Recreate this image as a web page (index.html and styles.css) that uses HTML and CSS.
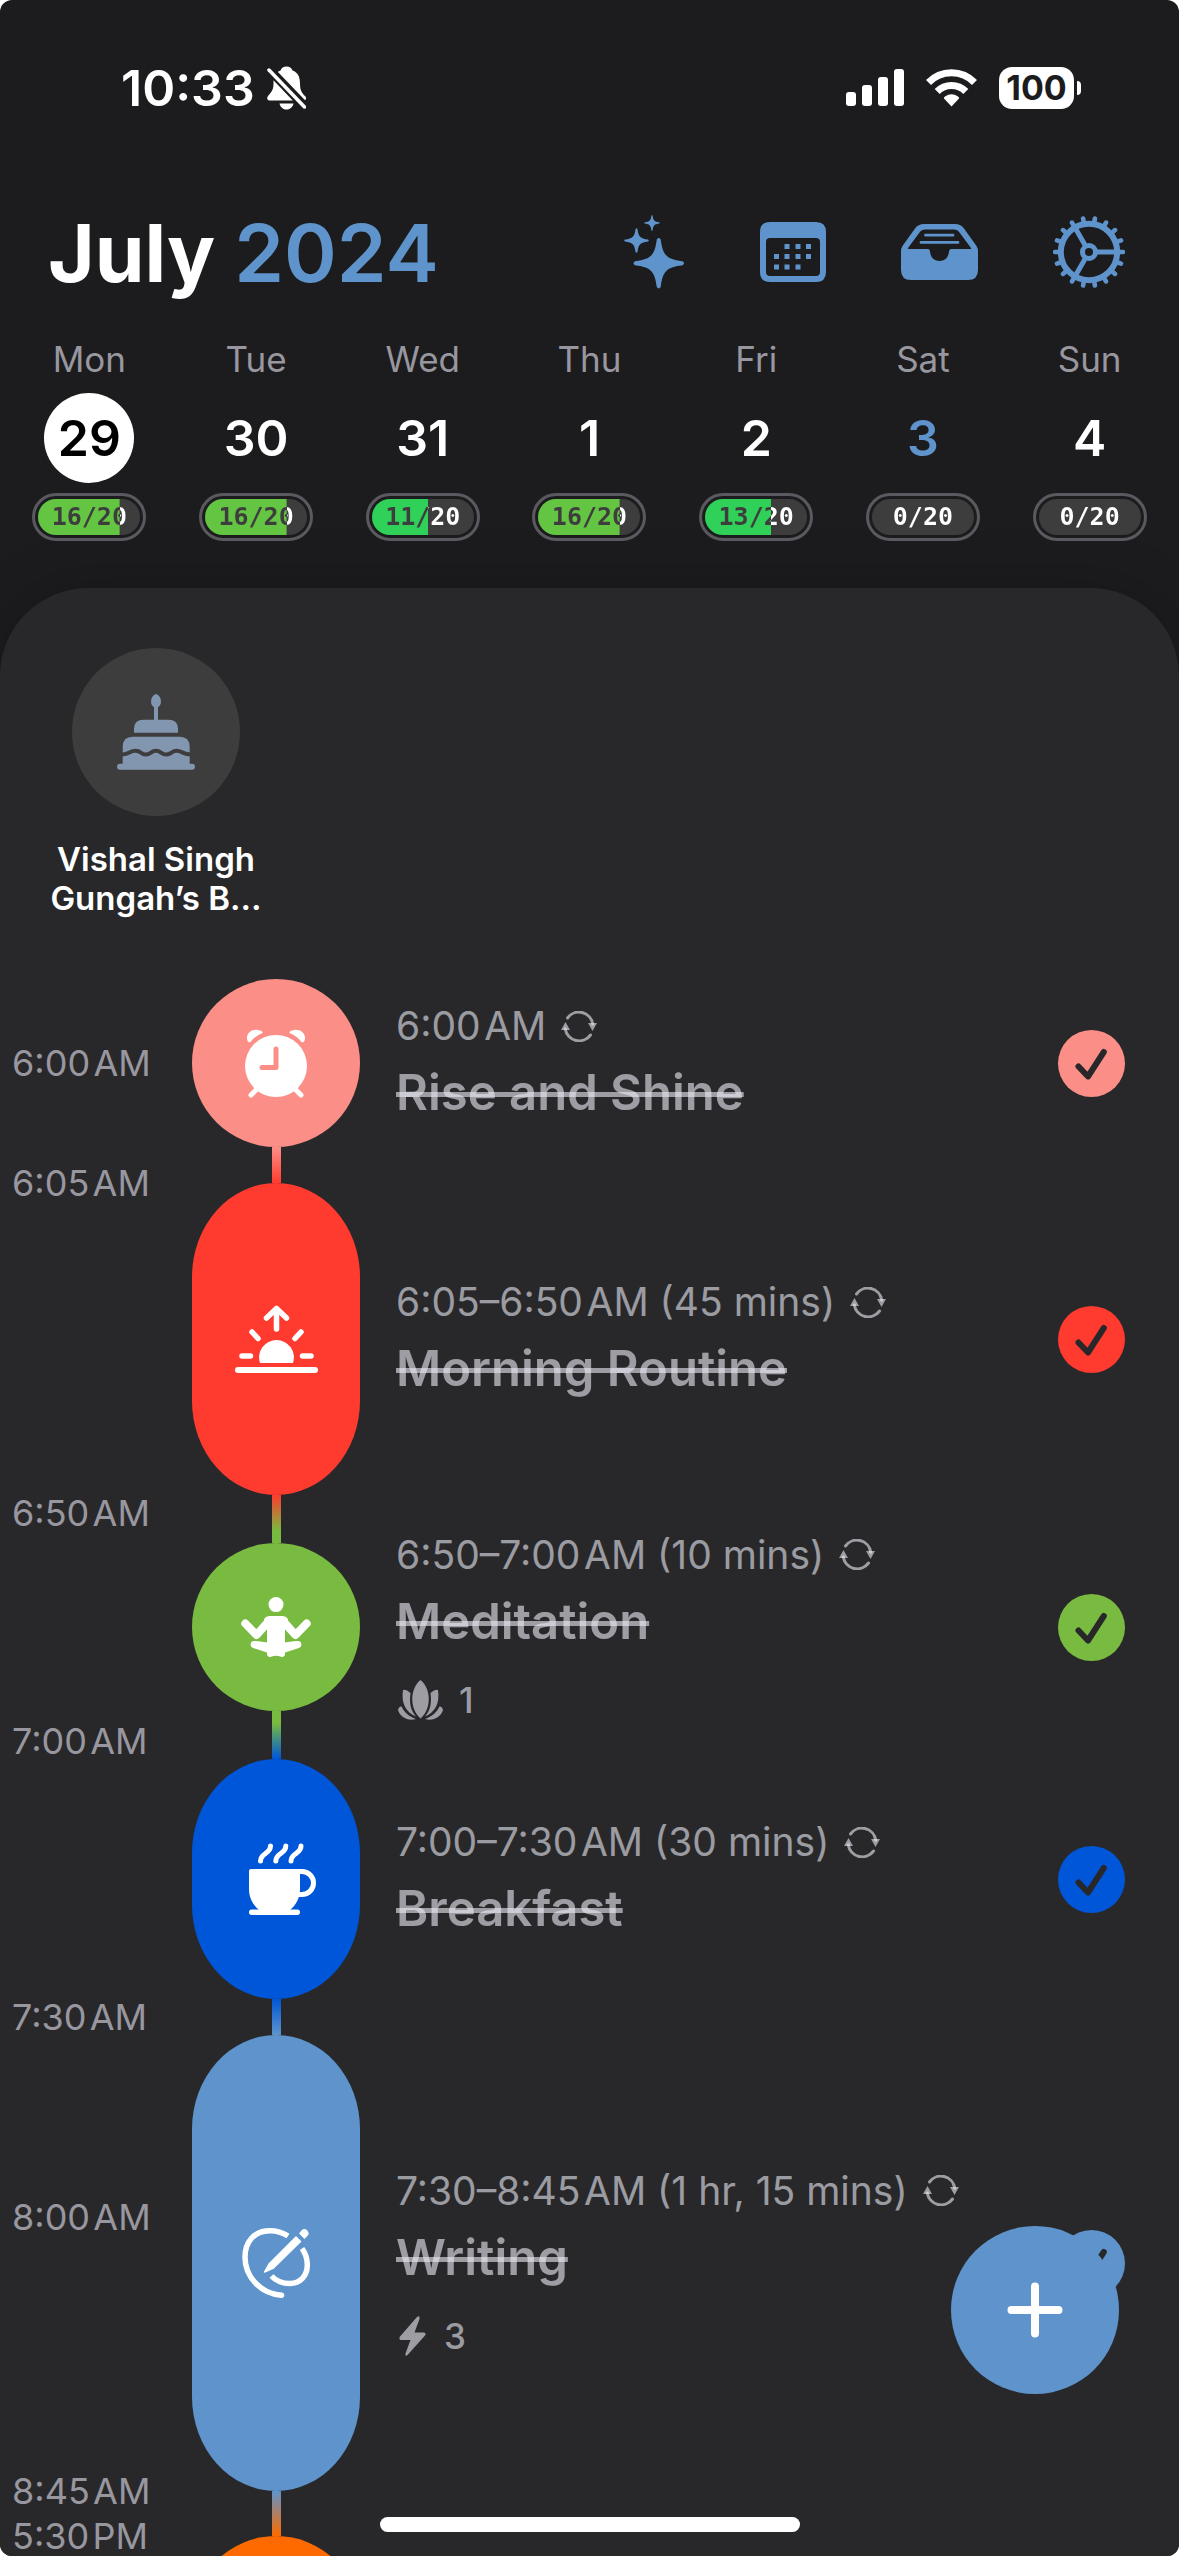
FILE: index.html
```html
<!DOCTYPE html>
<html lang="en">
<head>
    <meta charset="utf-8">
    <meta name="viewport" content="width=device-width, initial-scale=1">
    <title>Day Planner</title>
    <link rel="stylesheet" href="styles.css">
</head>
<body>
    <!-- shared shapes -->
    <svg class="defs" aria-hidden="true">
        <symbol id="repeat" viewBox="0 0 36 31">
            <path d="M6.5 7A14 14 0 0 1 31.7 13M29.5 24A14 14 0 0 1 4.3 18" fill="none" stroke="currentColor" stroke-width="3" stroke-linecap="round"/>
            <path d="M27 12h9l-4.500 8zM0 19h9l-4.500-8z" fill="currentColor"/>
        </symbol>
        <symbol id="tick" viewBox="0 0 67 67">
            <path d="M20.5 36.5L30 46.5L45.8 22" fill="none" stroke="#28282a" stroke-width="6" stroke-linecap="round" stroke-linejoin="round"/>
        </symbol>
        <symbol id="star" viewBox="-26 -26 52 52">
            <path d="M-2-24Q0-27 2-24C4-8 8-4 24-2Q27 0 24 2C8 4 4 8 2 24Q0 27-2 24C-4 8-8 4-24 2Q-27 0-24-2C-8-4-4-8-2-24z" fill="currentColor"/>
        </symbol>
        <symbol id="teeth" viewBox="0 0 36 36">
            <path d="M28.2 10.3L32 11.6M23 19.3L26 21.9M15 26L17 29.4M5.2 29.5L5.9 33.5" stroke="currentColor" stroke-width="4.6" stroke-linecap="round"/>
        </symbol>
    </svg>

    <div class="app">
        <div class="status-bar">
            <div class="status-left">
                <span class="clock">10:33</span>
                <svg width="39" height="44" viewBox="0 0 39 44">
                    <mask id="slash">
                        <rect width="39" height="44" fill="#fff"/>
                        <path d="M-2-1L42 45" stroke="#000" stroke-width="9"/>
                    </mask>
                    <path mask="url(#slash)" fill="#fff" d="M19.5.5c3 0 5 1.6 6 4 5.5 2 7.5 6.500 7.500 13 0 7 2 9.500 5 12.500 2 2 1 4.500-1.500 4.500H2.500c-2.500 0-3-2.500-1.500-4.500 3-3.500 5.500-5.500 5.500-12.500 0-6.500 2-11 7-13 1-2.400 3-4 6-4zM12.500 37.500h14c-1 4-4 6-7 6s-6-2-7-6z"/>
                    <path d="M2 4L37.500 41" stroke="#fff" stroke-width="3.500" stroke-linecap="round"/>
                </svg>
            </div>
            <div class="status-right">
                <svg width="58" height="38" viewBox="0 0 58 38" fill="#fff">
                    <rect x="0" y="23" width="10" height="14" rx="3"/>
                    <rect x="16" y="16" width="10" height="21" rx="3"/>
                    <rect x="32" y="8" width="10" height="29" rx="3"/>
                    <rect x="48" y="0" width="10" height="37" rx="3"/>
                </svg>
                <svg width="51" height="38" viewBox="0 0 51 38">
                    <path d="M2.500 13.500A32 32 0 0 1 48.500 13.500M11.200 22.500A20 20 0 0 1 39.800 22.500" fill="none" stroke="#fff" stroke-width="7"/>
                    <path d="M25.500 37.500L18 29.500Q17.500 28.500 19 27.500Q25.500 23 32 27.500Q33.500 28.500 33 29.500z" fill="#fff"/>
                </svg>
                <div class="battery"><span class="battery-level">100</span><span class="battery-tip"></span></div>
            </div>
        </div>

        <header class="header">
            <h1>July <span class="year">2024</span></h1>
            <div class="actions">
                <button class="icon-button" aria-label="Suggestions">
                    <svg width="61" height="74" viewBox="0 0 61 74">
                        <use href="#star" x="9" y="22.500" width="51.500" height="51.500"/>
                        <use href="#star" x="0" y="13" width="25" height="25"/>
                        <use href="#star" x="20" y="0" width="16" height="16"/>
                    </svg>
                </button>
                <button class="icon-button" aria-label="Calendar">
                    <svg width="66" height="60" viewBox="0 0 66 60" fill="currentColor">
                        <path fill-rule="evenodd" d="M10 0h46q10 0 10 10v40q0 10-10 10H10Q0 60 0 50V10Q0 0 10 0zM10 16q-4 0-4 4v30q0 4 4 4h46q4 0 4-4V20q0-4-4-4z"/>
                        <path d="M24.500 22h5v5h-5zM35.500 22h5v5h-5zM46 22h5v5h-5zM14 32h5v5h-5zM24.500 32h5v5h-5zM35.500 32h5v5h-5zM46 32h5v5h-5zM14 42.500h5v5h-5zM24.500 42.500h5v5h-5zM35.500 42.500h5v5h-5z"/>
                    </svg>
                </button>
                <button class="icon-button" aria-label="Inbox">
                    <svg width="77" height="56" viewBox="0 0 77 56" fill="currentColor">
                        <path fill-rule="evenodd" d="M23 0h31q6 0 9 4.500L75.500 22q1.500 2.500 1.500 5v19q0 10-10 10H10Q0 56 0 46V27q0-2.500 1.500-5L14 4.500Q17 0 23 0zM24 5.500q-3.500 0-5.500 3L7 24q-.5 1 .5 1H27q2 0 2 2.500Q30 37 38.500 37T48 27.500Q48 25 50 25h19.500q1 0 .5-1L58.500 8.500q-2-3-5.500-3z"/>
                        <path d="M24.500 11.200h27.500M20 18.400h37" stroke="currentColor" stroke-width="2.800" stroke-linecap="round"/>
                    </svg>
                </button>
                <button class="icon-button" aria-label="Settings">
                    <svg width="72" height="72" viewBox="-36 -36 72 72" fill="none" stroke="currentColor">
                        <circle r="28.200" stroke-width="6"/>
                        <circle r="6.500" stroke-width="5"/>
                        <path d="M8 0H27M-4-7L-13.500-23.400M-4 7L-13.500 23.400" stroke-width="5"/>
                        <path d="M30 0H34M-30 0H-34" stroke-width="4.600" stroke-linecap="round"/>
                        <use href="#teeth" width="36" height="36"/>
                        <use href="#teeth" width="36" height="36" transform="scale(-1 1)"/>
                        <use href="#teeth" width="36" height="36" transform="scale(1 -1)"/>
                        <use href="#teeth" width="36" height="36" transform="scale(-1 -1)"/>
                    </svg>
                </button>
            </div>
        </header>

        <nav class="week">
            <button class="day selected">
                <span class="day-name">Mon</span>
                <span class="day-number">29</span>
                <span class="progress" style="--done: 80%"><span class="progress-text">16/20</span></span>
            </button>
            <button class="day">
                <span class="day-name">Tue</span>
                <span class="day-number">30</span>
                <span class="progress" style="--done: 80%"><span class="progress-text">16/20</span></span>
            </button>
            <button class="day">
                <span class="day-name">Wed</span>
                <span class="day-number">31</span>
                <span class="progress half" style="--done: 55%"><span class="progress-text">11/20</span></span>
            </button>
            <button class="day">
                <span class="day-name">Thu</span>
                <span class="day-number">1</span>
                <span class="progress" style="--done: 80%"><span class="progress-text">16/20</span></span>
            </button>
            <button class="day">
                <span class="day-name">Fri</span>
                <span class="day-number">2</span>
                <span class="progress half" style="--done: 65%"><span class="progress-text">13/20</span></span>
            </button>
            <button class="day today">
                <span class="day-name">Sat</span>
                <span class="day-number">3</span>
                <span class="progress" style="--done: 0%"><span class="progress-text">0/20</span></span>
            </button>
            <button class="day">
                <span class="day-name">Sun</span>
                <span class="day-number">4</span>
                <span class="progress" style="--done: 0%"><span class="progress-text">0/20</span></span>
            </button>
        </nav>

        <main class="sheet">
            <div class="all-day">
                <div class="all-day-item">
                    <div class="all-day-icon">
                        <svg width="78" height="76" viewBox="0 0 78 76">
                            <g fill="#8296b0">
                                <path d="M39 0c3 1 5 4 5 7.500 0 3-1.300 4.500-3 5.500v13h-4V13c-1.700-1-3-2.500-3-5.500C34 4 36 1 39 0z"/>
                                <path d="M17 38.700V35q0-9.300 9.500-9.300h25q9.500 0 9.500 9.300v3.700z"/>
                                <path d="M5.700 70V53q0-10.300 10-10.300h47q10 0 10 10.300v17z"/>
                                <rect y="69.700" width="78" height="6" rx="3"/>
                            </g>
                            <path d="M4 60.500C12 60.500 12.500 56.800 18.500 56.800S23.500 60.500 28.700 60.500 34 56.800 39 56.800 44 60.500 49.300 60.500 54.500 56.800 59.700 56.800 66 60.500 74 60.500" fill="none" stroke="#3d3d3d" stroke-width="4"/>
                        </svg>
                    </div>
                    <div class="all-day-title">Vishal Singh Gungah’s B…</div>
                </div>
            </div>

            <ol class="timeline">
                <li class="event" style="--mins: 5">
                    <div class="times middle"><span class="time">6:00&#8202;AM</span></div>
                    <div class="pill salmon">
                        <svg width="64" height="69" viewBox="0 0 64 69">
                            <circle cx="32" cy="37" r="31" fill="#fff"/>
                            <path d="M6 13.500Q3 13 3 9C3 3 9 0 14 1Q19 2 18.500 4Q11 7 6 13.500zM58 13.500Q61 13 61 9C61 3 55 0 50 1Q45 2 45.500 4Q53 7 58 13.500z" fill="#fff"/>
                            <path d="M13 60L7 66M51 60L57 66" stroke="#fff" stroke-width="5" stroke-linecap="round"/>
                            <path d="M32 20V38.500H18" fill="none" stroke="#fb8f88" stroke-width="5" stroke-linecap="round" stroke-linejoin="round"/>
                        </svg>
                    </div>
                    <div class="details">
                        <div class="when">6:00&#8202;AM <svg width="36" height="31"><use href="#repeat"/></svg></div>
                        <div class="title">Rise and Shine</div>
                    </div>
                    <label class="check salmon"><input type="checkbox" aria-label="Rise and Shine" checked><svg width="67" height="67"><use href="#tick"/></svg></label>
                </li>
                <li class="link short">
                    <div class="line salmon-red"></div>
                </li>

                <li class="event" style="--mins: 45">
                    <div class="times"><span class="time edge">6:05&#8202;AM</span></div>
                    <div class="pill red">
                        <svg width="83" height="69" viewBox="0 0 83 69" fill="none" stroke="#fff" stroke-width="5.500" stroke-linecap="round" stroke-linejoin="round">
                            <path d="M3 65H80" stroke-width="6"/>
                            <path d="M25 58A17.400 17.400 0 1 1 58 58z" fill="#fff" stroke="none"/>
                            <path d="M7 51H15.500M67.500 51H76M17 27L23 33.500M66 27L60 33.500M41.500 3.500V24M31.500 13L41.500 3.500L51.500 13"/>
                        </svg>
                    </div>
                    <div class="details">
                        <div class="when">6:05–6:50&#8202;AM (45 mins) <svg width="36" height="31"><use href="#repeat"/></svg></div>
                        <div class="title">Morning Routine</div>
                    </div>
                    <label class="check red"><input type="checkbox" aria-label="Morning Routine" checked><svg width="67" height="67"><use href="#tick"/></svg></label>
                </li>
                <li class="link">
                    <div class="times"><span class="time">6:50&#8202;AM</span></div>
                    <div class="line red-green"></div>
                </li>

                <li class="event" style="--mins: 10">
                    <div class="times"></div>
                    <div class="pill green">
                        <svg width="70" height="61" viewBox="0 0 70 61">
                            <circle cx="35" cy="7.600" r="7.500" fill="#fff"/>
                            <path d="M4.300 26.500L15.500 38L28 24M65.700 26.500L54.500 38L42 24" fill="none" stroke="#fff" stroke-width="8" stroke-linecap="round" stroke-linejoin="round"/>
                            <path d="M29 19h12q4 0 6 3l-3 8v17H26V30l-3-8q2-3 6-3z" fill="#fff"/>
                            <path d="M13 44C20 44 24 46 30 45.500H40C46 46 50 44 57 44a3.600 3.600 0 0 1 1 7L44 55.500V57a3 3 0 0 1-4 2.800Q35 57.500 30 59.800a3 3 0 0 1-4-2.800V55.500L12 51a3.600 3.600 0 0 1 1-7z" fill="#fff"/>
                        </svg>
                    </div>
                    <div class="details">
                        <div class="when">6:50–7:00&#8202;AM (10 mins) <svg width="36" height="31"><use href="#repeat"/></svg></div>
                        <div class="title">Meditation</div>
                        <div class="extra">
                            <svg width="48" height="40" viewBox="-2 0 48 40" fill="currentColor">
                                <path d="M22.500 0C33.500 9 33.500 29 22.500 38.500C11.500 29 11.500 9 22.500 0z"/>
                                <path d="M5 10Q8 9 12.500 13C11 24 13 31 18 36.500C8 32 3 24 5 10zM40 10Q37 9 32.500 13C34 24 32 31 27 36.500C37 32 42 24 40 10z"/>
                                <path d="M0 30Q1 26 3.500 26.500C6 32 11 36.500 18 39C10 41.500 2 37 0 30zM45 30Q44 26 41.500 26.500C39 32 34 36.500 27 39C35 41.500 43 37 45 30z"/>
                            </svg>
                            <span>1</span>
                        </div>
                    </div>
                    <label class="check green"><input type="checkbox" aria-label="Meditation" checked><svg width="67" height="67"><use href="#tick"/></svg></label>
                </li>
                <li class="link">
                    <div class="times end"><span class="time">7:00&#8202;AM</span></div>
                    <div class="line green-blue"></div>
                </li>

                <li class="event" style="--mins: 30">
                    <div class="times"></div>
                    <div class="pill blue">
                        <svg class="cup" width="67" height="72" viewBox="0 0 67 72">
                            <path d="M2 26H51V46C51 55 47 62 41 67H10C4 62 0 55 0 46V28Q0 26 2 26z" fill="#fff"/>
                            <rect y="66.500" width="51" height="5.500" rx="2.700" fill="#fff"/>
                            <path d="M49 28.500H53a11.500 11.500 0 0 1 0 23H48M11.500 18C11.500 10 21.500 11 21.500 3M26.800 18C26.800 10 36.800 11 36.800 3M42 18C42 10 52 11 52 3" fill="none" stroke="#fff" stroke-width="5" stroke-linecap="round"/>
                        </svg>
                    </div>
                    <div class="details">
                        <div class="when">7:00–7:30&#8202;AM (30 mins) <svg width="36" height="31"><use href="#repeat"/></svg></div>
                        <div class="title">Breakfast</div>
                    </div>
                    <label class="check blue"><input type="checkbox" aria-label="Breakfast" checked><svg width="67" height="67"><use href="#tick"/></svg></label>
                </li>
                <li class="link short">
                    <div class="times"><span class="time">7:30&#8202;AM</span></div>
                    <div class="line blue-sky"></div>
                </li>

                <li class="event" style="--mins: 75">
                    <div class="times">
                        <span class="spacer" style="flex-grow: 30"></span>
                        <span class="time edge">8:00&#8202;AM</span>
                        <span class="spacer" style="flex-grow: 45"></span>
                        <span class="time edge">8:45&#8202;AM</span>
                    </div>
                    <div class="pill sky">
                        <svg width="68" height="70" viewBox="0 0 68 70">
                            <path d="M46 8C39 3.500 33 2.800 28 2.800C12 2.800 3 14 3 29C3 50 20 66 39.500 67.200" fill="none" stroke="#fff" stroke-width="5.500"/>
                            <path d="M60 20.500C64 26 65.300 32 65.300 37C65.300 48 58 55.500 48 55.500C41 55.500 34 53 29.500 48" fill="none" stroke="#fff" stroke-width="5.500"/>
                            <circle cx="39.500" cy="67.200" r="2.750" fill="#fff"/>
                            <path d="M22.500 44L27 36L54 9L58.500 13.500L31.500 40z" fill="#fff" stroke="#fff" stroke-width="1.500" stroke-linejoin="round"/>
                            <path d="M57 5.500L59.500 2.500a4 4 0 0 1 5.800 5.600L62.500 11z" fill="#fff"/>
                        </svg>
                    </div>
                    <div class="details">
                        <div class="when">7:30–8:45&#8202;AM (1 hr, 15 mins) <svg width="36" height="31"><use href="#repeat"/></svg></div>
                        <div class="title">Writing</div>
                        <div class="extra">
                            <svg width="33" height="40" viewBox="-3 0 33 40" fill="currentColor">
                                <path d="M18 1Q21-1 20.500 3L15.500 16.500H25Q27.500 17 26 19.500L8.500 39Q6 41 6.500 37.500L11.500 24H1.500Q-.5 23 1 20.500z"/>
                            </svg>
                            <span>3</span>
                        </div>
                    </div>
                    <label class="check sky"><input type="checkbox" aria-label="Writing" checked><svg width="67" height="67"><use href="#tick"/></svg></label>
                </li>
                <li class="link break">
                    <div class="line sky-orange"></div>
                </li>

                <li class="event" style="--mins: 15">
                    <div class="times"><span class="time edge">5:30&#8202;PM</span></div>
                    <div class="pill orange"></div>
                </li>
            </ol>
        </main>

        <button class="add" aria-label="Add task">
            <svg width="56" height="56" viewBox="0 0 56 56">
                <path d="M28 4.500V51.500M4.500 28H51.500" stroke="#fff" stroke-width="8" stroke-linecap="round"/>
            </svg>
        </button>
        <div class="home-bar"></div>
    </div>
</body>
</html>
```

FILE: styles.css
```css
* {
    box-sizing: border-box;
}
body {
    margin: 0;
    background-color: #ffffff;
    font-family: Inter, "Liberation Sans", sans-serif;
    color: #ffffff;
}
button {
    padding: 0;
    border: none;
    background: none;
    font-family: inherit;
    color: inherit;
    cursor: pointer;
}
svg {
    display: block;
    flex-shrink: 0;
}
.defs {
    position: absolute;
    width: 0;
    height: 0;
}
.app {
    position: relative;
    display: flex;
    flex-direction: column;
    height: 100vh;
    overflow: hidden;
    background-color: #1c1c1e;
    border-radius: 12px;
}

/* status bar */
.status-bar {
    display: flex;
    flex-shrink: 0;
    justify-content: space-between;
    align-items: center;
    height: 176px;
    padding: 0 98px 0 121px;
}
.status-left {
    display: flex;
    align-items: center;
    gap: 12px;
}
.clock {
    font-size: 50px;
    font-weight: 600;
}
.status-right {
    display: flex;
    align-items: center;
    gap: 22px;
}
.battery {
    display: flex;
    align-items: center;
    gap: 3px;
}
.battery-level {
    width: 75px;
    border-radius: 13px;
    background-color: #ffffff;
    color: #1c1c1e;
    font-size: 34px;
    font-weight: 700;
    line-height: 42px;
    text-align: center;
}
.battery-tip {
    width: 4px;
    height: 14px;
    border-radius: 0 4px 4px 0;
    background-color: #ffffff;
}

/* month and actions */
.header {
    display: flex;
    flex-shrink: 0;
    justify-content: space-between;
    align-items: center;
    height: 152px;
    padding: 0 54px 0 48px;
}
h1 {
    margin: 0;
    font-size: 80px;
    font-weight: 700;
    white-space: nowrap;
}
.year {
    font-weight: 600;
    color: #5e94cb;
}
.actions {
    display: flex;
    align-items: center;
    gap: 75px;
}
.icon-button {
    color: #5e94cb;
}

/* week strip */
.week {
    display: grid;
    flex-shrink: 0;
    grid-template-columns: repeat(7, 1fr);
    padding: 8px 6px 47px;
}
.day {
    display: flex;
    flex-direction: column;
    align-items: center;
    gap: 10px;
}
.day-name {
    font-size: 35px;
    line-height: 47px;
    color: #98979f;
}
.day-number {
    width: 90px;
    border-radius: 50%;
    font-size: 50px;
    font-weight: 600;
    line-height: 90px;
}
.selected .day-number {
    background-color: #ffffff;
    color: #000000;
}
.today .day-number {
    color: #5e94cb;
}
.progress {
    --fill: #64c543;
    position: relative;
    width: 114px;
    padding: 3px;
    border: 3px solid #5a5960;
    border-radius: 24px;
}
.half {
    --fill: #30d158;
}
.progress::before {
    content: "";
    position: absolute;
    inset: 3px;
    border-radius: 18px;
    background: linear-gradient(var(--fill), var(--fill)) 0 0 / var(--done) 100% no-repeat #3d3d3d;
}
/* letters over the filled part turn dark */
.progress-text {
    position: relative;
    display: block;
    background: linear-gradient(90deg, #3d3d3d var(--done), #ffffff var(--done));
    background-clip: text;
    -webkit-background-clip: text;
    color: transparent;
    font-family: "DejaVu Sans Mono", monospace;
    font-size: 25px;
    font-weight: 700;
    line-height: 36px;
    text-align: center;
}

/* sheet */
.sheet {
    flex: 1;
    min-height: 0;
    padding-top: 60px;
    border-radius: 88px 88px 0 0;
    background-color: #28282a;
    box-shadow: 0 0 60px rgba(0, 0, 0, 0.2);
}
.all-day {
    display: flex;
    padding: 0 48px;
}
.all-day-item {
    display: flex;
    flex-direction: column;
    align-items: center;
    gap: 24px;
    width: 216px;
}
.all-day-icon {
    display: flex;
    justify-content: center;
    align-items: center;
    width: 168px;
    height: 168px;
    border-radius: 50%;
    background-color: #3d3d3d;
}
.all-day-title {
    font-size: 33px;
    font-weight: 600;
    line-height: 39px;
    text-align: center;
}

/* timeline */
.timeline {
    margin: 0;
    padding: 61px 54px 0 12px;
    list-style: none;
}
.event,
.link {
    display: grid;
    grid-template-columns: 180px 168px 1fr auto;
    grid-template-rows: minmax(0, 1fr);
}
.event {
    height: max(168px, calc(96px + var(--mins) * 24px / 5));
}
.link {
    height: 48px;
}
.link.short {
    height: 36px;
}
.link.break {
    height: 45px;
}
.times {
    display: flex;
    flex-direction: column;
}
.times.middle {
    justify-content: center;
}
.times.end {
    justify-content: flex-end;
}
.time {
    font-size: 36px;
    line-height: 36px;
    color: #98979f;
}
/* hour sits centred on the boundary it marks */
.time.edge {
    margin: -18px 0;
}
.line {
    grid-column: 2;
    justify-self: center;
    width: 9px;
}
.pill {
    display: flex;
    justify-content: center;
    align-items: center;
    border-radius: 84px / min(94px, 50%);
}
.cup {
    margin-left: 12px;
}
.details {
    display: flex;
    flex-direction: column;
    justify-content: center;
    padding-left: 36px;
    color: rgba(235, 235, 245, 0.6);
}
.when {
    display: flex;
    align-items: center;
    gap: 15px;
    font-size: 39px;
    line-height: 46px;
    white-space: nowrap;
}
.title {
    align-self: flex-start;
    margin-top: 14px;
    font-size: 49px;
    font-weight: 600;
    line-height: 60px;
    text-decoration: line-through;
    text-decoration-thickness: 5px;
    text-decoration-skip-ink: none;
}
.extra {
    display: flex;
    align-items: center;
    gap: 15px;
    margin-top: 25px;
    font-size: 35px;
    font-weight: 500;
    line-height: 46px;
}
.check {
    display: grid;
    align-self: center;
    border-radius: 50%;
    cursor: pointer;
}
.check input,
.check svg {
    grid-area: 1 / 1;
}
.check input {
    appearance: none;
    margin: 0;
}
.check input:not(:checked) + svg {
    visibility: hidden;
}

.salmon { background-color: #fb8f88; }
.red { background-color: #ff3b2f; }
.green { background-color: #78bb40; }
.blue { background-color: #0056d8; }
.sky { background-color: #5e94cb; }
.orange { background-color: #ff6a00; }

.salmon-red { background: linear-gradient(#fb8f88, #ff3b2f); }
.red-green { background: linear-gradient(#ff3b2f, #78bb40 75%); }
.green-blue { background: linear-gradient(#78bb40 25%, #0056d8); }
.blue-sky { background: linear-gradient(#0056d8, #5e94cb); }
.sky-orange { background: linear-gradient(#5e94cb, #ff6a00); }

/* floating controls */
.add {
    position: absolute;
    right: 60px;
    bottom: 162px;
    display: flex;
    justify-content: center;
    align-items: center;
    width: 168px;
    height: 168px;
    border-radius: 50%;
    background-color: #5e94cb;
}
.home-bar {
    position: absolute;
    bottom: 24px;
    left: 50%;
    width: 420px;
    height: 15px;
    border-radius: 8px;
    background-color: #ffffff;
    transform: translateX(-50%);
}
```
